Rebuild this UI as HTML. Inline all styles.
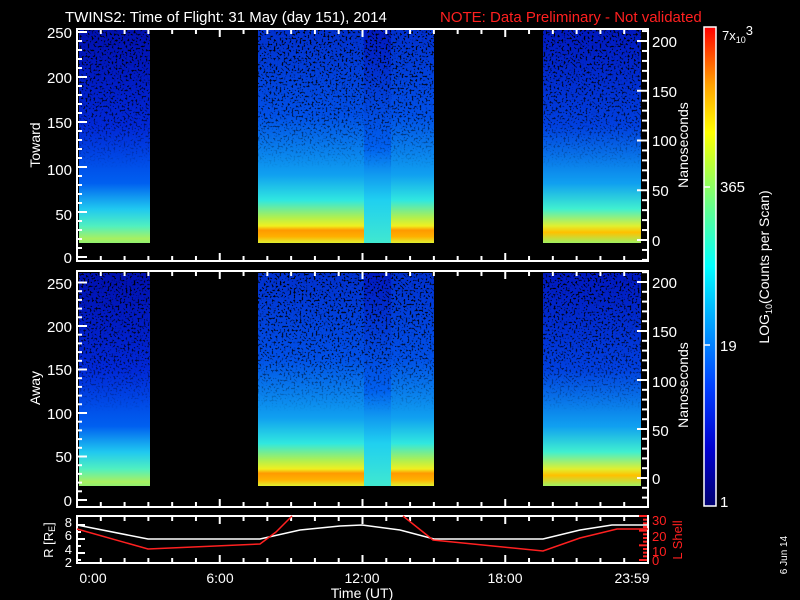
<!DOCTYPE html>
<html><head><style>
html,body{margin:0;padding:0;background:#000;}
svg{display:block}
text{font-family:"Liberation Sans",sans-serif;fill:#fff;}
</style></head><body>
<svg id="s" width="800" height="600" viewBox="0 0 800 600" xmlns="http://www.w3.org/2000/svg">
<defs>
<linearGradient id="gA" x1="0" y1="0" x2="0" y2="1">
<stop offset="0" stop-color="#0010b0"/><stop offset="0.45" stop-color="#0028d8"/>
<stop offset="0.72" stop-color="#0060f0"/><stop offset="0.84" stop-color="#20c8f0"/>
<stop offset="0.92" stop-color="#50f0c0"/><stop offset="0.98" stop-color="#a8f060"/>
<stop offset="1" stop-color="#90f070"/></linearGradient>
<linearGradient id="gB" x1="0" y1="0" x2="0" y2="1">
<stop offset="0" stop-color="#0030d0"/><stop offset="0.4" stop-color="#0050e8"/>
<stop offset="0.68" stop-color="#10a0f0"/><stop offset="0.8" stop-color="#30e8e0"/>
<stop offset="0.88" stop-color="#b0f050"/><stop offset="0.92" stop-color="#f0f020"/>
<stop offset="0.94" stop-color="#ff9a00"/><stop offset="0.97" stop-color="#ffb000"/>
<stop offset="1" stop-color="#e0f030"/></linearGradient>
<linearGradient id="gC" x1="0" y1="0" x2="0" y2="1">
<stop offset="0" stop-color="#0018c0"/><stop offset="0.55" stop-color="#0060f0"/>
<stop offset="0.8" stop-color="#20d0f0"/><stop offset="1" stop-color="#40e8d0"/></linearGradient>
<linearGradient id="gD" x1="0" y1="0" x2="0" y2="1">
<stop offset="0" stop-color="#0018c0"/><stop offset="0.45" stop-color="#0040e0"/>
<stop offset="0.72" stop-color="#10a0f0"/><stop offset="0.84" stop-color="#40f0d0"/>
<stop offset="0.92" stop-color="#e0f030"/><stop offset="0.95" stop-color="#ffc000"/>
<stop offset="1" stop-color="#a0f060"/></linearGradient>
<linearGradient id="cb" x1="0" y1="1" x2="0" y2="0">
<stop offset="0" stop-color="#000070"/><stop offset="0.12" stop-color="#0000d0"/>
<stop offset="0.25" stop-color="#0040ff"/><stop offset="0.4" stop-color="#00b0ff"/>
<stop offset="0.5" stop-color="#00ffff"/><stop offset="0.62" stop-color="#60ff90"/>
<stop offset="0.72" stop-color="#c0ff30"/><stop offset="0.78" stop-color="#ffff00"/>
<stop offset="0.88" stop-color="#ffa000"/><stop offset="1" stop-color="#ff0000"/></linearGradient>
<linearGradient id="fade" x1="0" y1="0" x2="0" y2="1">
<stop offset="0" stop-color="#fff"/><stop offset="0.4" stop-color="#fff" stop-opacity="0.7"/>
<stop offset="0.65" stop-color="#fff" stop-opacity="0"/></linearGradient>
<mask id="m" maskContentUnits="objectBoundingBox"><rect width="1" height="1" fill="url(#fade)"/></mask>
<filter id="sp" x="0" y="0" width="1" height="1">
<feTurbulence type="fractalNoise" baseFrequency="0.5 0.5" numOctaves="1" seed="3"/>
<feColorMatrix type="matrix" values="0 0 0 0 0  0 0 0 0 0  0 0 0 0 0  6 0 0 0 -3.2"/>
</filter>
</defs>
<text x="65" y="22" font-size="15">TWINS2: Time of Flight: 31 May (day 151), 2014</text>
<text x="440" y="22" font-size="15" style="fill:#ff2020">NOTE: Data Preliminary - Not validated</text>

<g>
<rect x="79" y="30" width="71" height="213" fill="url(#gA)"/>
<rect x="258" y="30" width="106" height="213" fill="url(#gB)"/>
<rect x="364" y="30" width="27" height="213" fill="url(#gC)"/>
<rect x="391" y="30" width="43" height="213" fill="url(#gB)"/>
<rect x="543" y="30" width="98" height="213" fill="url(#gD)"/>
<g mask="url(#m)"><rect x="79" y="30" width="562" height="213" filter="url(#sp)"/></g>
<rect x="150" y="28" width="108" height="220" fill="#000"/>
<rect x="434" y="28" width="109" height="220" fill="#000"/>
</g>
<g>
<rect x="79" y="273" width="71" height="213" fill="url(#gA)"/>
<rect x="258" y="273" width="106" height="213" fill="url(#gB)"/>
<rect x="364" y="273" width="27" height="213" fill="url(#gC)"/>
<rect x="391" y="273" width="43" height="213" fill="url(#gB)"/>
<rect x="543" y="273" width="98" height="213" fill="url(#gD)"/>
<g mask="url(#m)"><rect x="79" y="273" width="562" height="213" filter="url(#sp)"/></g>
<rect x="150" y="271" width="108" height="220" fill="#000"/>
<rect x="434" y="271" width="109" height="220" fill="#000"/>
</g>

<g fill="none" stroke="#fff" stroke-width="2">
<rect x="77" y="29" width="571" height="232"/>
<rect x="77" y="271" width="571" height="236"/>
<rect x="77" y="516" width="571" height="47"/>
</g>
<g id="ticks" stroke="#fff" stroke-width="2"></g>
<g id="rticks" stroke="#ff2020" stroke-width="2"></g>
<g font-size="15" text-anchor="end">
<text x="72" y="38">250</text><text x="72" y="83">200</text><text x="72" y="128">150</text><text x="72" y="175">100</text><text x="72" y="220">50</text><text x="72" y="263">0</text>
<text x="72" y="289">250</text><text x="72" y="332">200</text><text x="72" y="375">150</text><text x="72" y="419">100</text><text x="72" y="462">50</text><text x="72" y="506">0</text>
<text x="72" y="527" font-size="13">8</text><text x="72" y="540" font-size="13">6</text><text x="72" y="554" font-size="13">4</text><text x="72" y="567" font-size="13">2</text>
</g>
<g font-size="15">
<text x="652" y="47">200</text><text x="652" y="97">150</text><text x="652" y="146">100</text><text x="652" y="196">50</text><text x="652" y="246">0</text>
<text x="652" y="288">200</text><text x="652" y="337">150</text><text x="652" y="387">100</text><text x="652" y="436">50</text><text x="652" y="484">0</text>
<text x="722" y="40" font-size="13">7x<tspan font-size="9" dy="3">10</tspan><tspan dy="-8">3</tspan></text>
<text x="720" y="192">365</text><text x="720" y="351">19</text><text x="720" y="507">1</text>
</g>
<g font-size="13">
<text x="652" y="525" style="fill:#ff2020">30</text><text x="652" y="541" style="fill:#ff2020">20</text><text x="652" y="556" style="fill:#ff2020">10</text><text x="652" y="565" style="fill:#ff2020">0</text>
</g>
<text transform="translate(688,145) rotate(-90)" font-size="14" text-anchor="middle">Nanoseconds</text>
<text transform="translate(688,385) rotate(-90)" font-size="14" text-anchor="middle">Nanoseconds</text>
<text transform="translate(769,267) rotate(-90)" font-size="14" text-anchor="middle">LOG<tspan font-size="9" dy="3">10</tspan><tspan dy="-3">(Counts per Scan)</tspan></text>
<text transform="translate(40,145) rotate(-90)" font-size="14" text-anchor="middle">Toward</text>
<text transform="translate(40,388) rotate(-90)" font-size="14" text-anchor="middle">Away</text>
<text transform="translate(53,540) rotate(-90)" font-size="13" text-anchor="middle">R [R<tspan font-size="9" dy="2">E</tspan><tspan dy="-2">]</tspan></text>
<text transform="translate(682,540) rotate(-90)" font-size="13" text-anchor="middle" style="fill:#ff2020">L Shell</text>
<text transform="translate(787,555) rotate(-90)" font-size="10" text-anchor="middle">6 Jun 14</text>
<g font-size="14" text-anchor="middle">
<text x="93" y="583">0:00</text><text x="220" y="583">6:00</text><text x="362" y="583">12:00</text><text x="505" y="583">18:00</text><text x="632" y="583">23:59</text>
<text x="362" y="598">Time (UT)</text>
</g>
<rect x="704" y="27" width="12" height="479" fill="url(#cb)" stroke="#fff" stroke-width="1.5"/>
<g stroke="#fff" stroke-width="1.5"><line x1="704" y1="187" x2="710" y2="187"/><line x1="704" y1="345" x2="710" y2="345"/></g>
<polyline fill="none" stroke="#fff" stroke-width="1.5" points="77,525 148,539 260,539 300,530 340,526 362,525 400,530 434,539 543,539 580,530 612,525 648,525"/>
<polyline fill="none" stroke="#ff2020" stroke-width="1.5" points="77,529 148,549 260,544 276,532 292,516"/>
<polyline fill="none" stroke="#ff2020" stroke-width="1.5" points="403,516 433,540 543,551 580,538 617,529 648,529"/>
</svg>
<script>
var g=document.getElementById('ticks'),r=document.getElementById('rticks'),s='';
function L(x1,y1,x2,y2){s+='<line x1="'+x1+'" y1="'+y1+'" x2="'+x2+'" y2="'+y2+'"/>';}
[[29,261],[271,507],[516,563]].forEach(function(p){
 for(var h=0;h<=24;h++){var x=77+h*571/24;var maj=h%6==0;var l=maj?8:5;
  L(x,p[0],x,p[0]+l);L(x,p[1],x,p[1]-l);}
});
for(var v=0;v<=250;v+=10){var y=257-v*0.9;var l=v%50==0?10:5;L(77,y,77+l,y);}
for(var v=0;v<=250;v+=10){var y=500-v*0.87;var l=v%50==0?10:5;L(77,y,77+l,y);}
for(var v=-20;v<=210;v+=10){var y=240-v*0.995;if(y<30||y>260)continue;var l=v%50==0?10:5;L(647,y,647-l,y);}
for(var v=-20;v<=210;v+=10){var y=478-v*0.98;if(y<272||y>506)continue;var l=v%50==0?10:5;L(647,y,647-l,y);}
[525,532,539,546,553,560].forEach(function(y,i){L(77,y,77+(i%2==0?8:4),y);});
g.innerHTML=s;s='';
for(var v=0;v<=30;v+=2.5){var y=560-v*44/30;L(647,y,647-(v%10==0?8:4),y);}
r.innerHTML=s;
</script>
</body></html>
